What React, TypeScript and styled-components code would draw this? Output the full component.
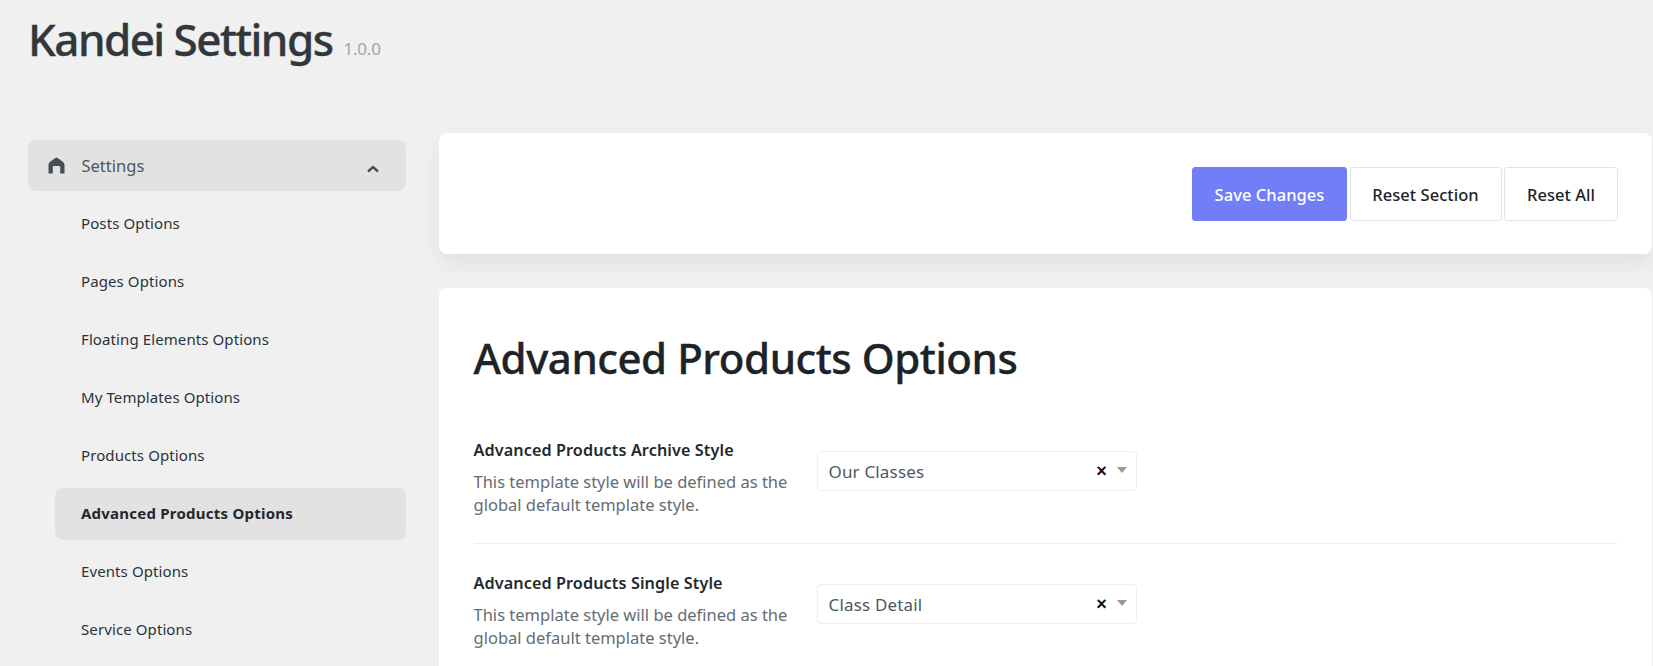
import React from "react";
import styled, { createGlobalStyle } from "styled-components";

const Global = createGlobalStyle`
  html, body { margin: 0; padding: 0; height: 666px; overflow: hidden; background: #f0f0f1; }
  * { box-sizing: border-box; }
  body { font-family: "Noto Sans", "Open Sans", sans-serif; color: #1d2327; }
`;

const Page = styled.div`
  height: 666px;
  overflow: hidden;
  display: flex;
  flex-direction: column;
`;
const Header = styled.header`
  height: 133px;
  padding: 7px 0 0 28px;
  display: flex;
  align-items: baseline;
  gap: 11px;
  flex: none;
`;
const Title = styled.h1`
  margin: 0;
  font-size: 44px;
  line-height: 64px;
  font-weight: 500;
  letter-spacing: -1.55px;
  -webkit-text-stroke: 0.35px #32373c;
  color: #32373c;
`;
const Version = styled.span`
  font-size: 17px;
  letter-spacing: -0.2px;
  color: #a0a5aa;
  position: relative;
  top: -1px;
`;
const Body = styled.div`
  display: flex;
  flex: 1;
  min-height: 0;
`;
const Sidebar = styled.nav`
  width: 378px;
  margin-left: 28px;
  margin-top: 7px;
  flex: none;
`;
const SectionHead = styled.div`
  height: 51px;
  border-radius: 8px;
  background: #e2e2e2;
  display: flex;
  align-items: center;
  padding: 0 26px 0 20px;
  color: #50575e;
  font-size: 16.5px;
`;
const HeadLabel = styled.span`
  flex: 1;
  margin-left: 16.5px;
`;
const ChevronSlot = styled.span`
  display: flex;
  margin-top: 6px;
`;
const SubList = styled.ul`
  list-style: none;
  margin: 6.5px 0 0 27px;
  padding: 0;
  display: flex;
  flex-direction: column;
  gap: 6px;
`;
const SubItem = styled.li<{ $active?: boolean }>`
  height: 52px;
  display: flex;
  align-items: center;
  padding: 0 0 2px 26px;
  border-radius: 8px;
  font-size: 15px;
  letter-spacing: ${(p) => (p.$active ? "0.23px" : "0.1px")};
  font-weight: ${(p) => (p.$active ? 700 : 400)};
  background: ${(p) => (p.$active ? "#e2e2e2" : "transparent")};
  color: ${(p) => (p.$active ? "#23282d" : "#2c3338")};
`;
const Main = styled.main`
  flex: 1;
  min-width: 0;
  margin-left: 32.5px;
  margin-right: 1px;
  display: flex;
  flex-direction: column;
  gap: 34px;
`;
const ActionCard = styled.section`
  height: 121px;
  flex: none;
  background: #fff;
  border-radius: 8px;
  box-shadow: 0 10px 20px rgba(30, 40, 60, 0.07);
  display: flex;
  align-items: center;
  justify-content: flex-end;
  gap: 2.5px;
  padding: 0 34px 0 0;
`;
const Button = styled.button<{ $primary?: boolean; $w: number }>`
  height: 54px;
  width: ${(p) => p.$w}px;
  font: 500 16.5px "Noto Sans", sans-serif;
  letter-spacing: 0.05px;
  padding: 1px 0 0;
  border-radius: 3px;
  cursor: pointer;
  border: 1px solid ${(p) => (p.$primary ? "#727ef7" : "#e2e4e7")};
  background: ${(p) => (p.$primary ? "#727ef7" : "#fff")};
  color: ${(p) => (p.$primary ? "#fff" : "#1d2327")};
`;
const ContentCard = styled.section`
  flex: 1;
  background: #fff;
  border-radius: 8px 8px 0 0;
  padding: 40px 35px 0 35px;
`;
const Heading = styled.h2`
  margin: 0 0 51px;
  font-size: 42px;
  line-height: 60px;
  font-weight: 500;
  letter-spacing: -0.45px;
  -webkit-text-stroke: 0.35px #1d2327;
  color: #1d2327;
`;
const Row = styled.div`
  display: flex;
  padding: 0 0 27px;
  margin-bottom: 28px;
  border-bottom: 1px solid #eeeeee;
  &:last-child { border-bottom: none; }
`;
const LabelCol = styled.div`
  width: 343px;
  flex: none;
`;
const Label = styled.div`
  font-size: 16.2px;
  line-height: 22px;
  font-weight: 600;
  letter-spacing: 0.1px;
  color: #23282d;
  margin-bottom: 10px;
`;
const Desc = styled.div`
  font-size: 16.5px;
  line-height: 22.5px;
  color: #666c72;
  width: 330px;
`;
const Select = styled.div`
  width: 320px;
  height: 40px;
  margin-top: 12px;
  border: 1px solid #eeeeee;
  border-radius: 4px;
  display: flex;
  align-items: center;
  padding: 0 9px 0 11px;
  font-size: 17px;
  letter-spacing: 0.17px;
  color: #50575e;
`;
const SelectValue = styled.span`
  flex: 1;
`;
const Clear = styled.span`
  font: 700 18px/1 "Liberation Sans", sans-serif;
  color: #111;
  margin-right: 9.5px;
`;
const Caret = styled.span`
  width: 0;
  height: 0;
  border-left: 5px solid transparent;
  border-right: 5px solid transparent;
  border-top: 6px solid #999;
  margin-bottom: 2px;
`;

const items = [
  "Posts Options",
  "Pages Options",
  "Floating Elements Options",
  "My Templates Options",
  "Products Options",
  "Advanced Products Options",
  "Events Options",
  "Service Options",
];

const HomeIcon = () => (
  <svg width="17" height="17" viewBox="0 0 17 17" fill="#484e54" aria-hidden="true">
    <path d="M8.500 .5c.5 0 6 3.700 7.300 5.200.5.600.7 1.200.7 2V16.500h-4.300v-6.400c0-.8-.4-1.200-1.200-1.200H6c-.8 0-1.200.4-1.200 1.200v6.400H.5V7.700c0-.8.200-1.400.7-2C2.500 4.200 8 .5 8.500 .5z" />
  </svg>
);
const ChevronUp = () => (
  <svg width="14" height="10" viewBox="0 0 14 10" fill="none" stroke="#484e54" strokeWidth="2.4" aria-hidden="true">
    <path d="M2 7.500 7 3l5 4.500" />
  </svg>
);

const Field = ({ label, value }: { label: string; value: string }) => (
  <Row>
    <LabelCol>
      <Label>{label}</Label>
      <Desc>This template style will be defined as the global default template style.</Desc>
    </LabelCol>
    <Select>
      <SelectValue>{value}</SelectValue>
      <Clear>×</Clear>
      <Caret />
    </Select>
  </Row>
);

export default function App() {
  return (
    <Page>
      <Global />
      <Header>
        <Title>Kandei Settings</Title>
        <Version>1.0.0</Version>
      </Header>
      <Body>
        <Sidebar>
          <SectionHead>
            <HomeIcon />
            <HeadLabel>Settings</HeadLabel>
            <ChevronSlot><ChevronUp /></ChevronSlot>
          </SectionHead>
          <SubList>
            {items.map((t) => (
              <SubItem key={t} $active={t === "Advanced Products Options"}>{t}</SubItem>
            ))}
          </SubList>
        </Sidebar>
        <Main>
          <ActionCard>
            <Button $primary $w={155}>Save Changes</Button>
            <Button $w={152}>Reset Section</Button>
            <Button $w={114}>Reset All</Button>
          </ActionCard>
          <ContentCard>
            <Heading>Advanced Products Options</Heading>
            <Field label="Advanced Products Archive Style" value="Our Classes" />
            <Field label="Advanced Products Single Style" value="Class Detail" />
          </ContentCard>
        </Main>
      </Body>
    </Page>
  );
}
